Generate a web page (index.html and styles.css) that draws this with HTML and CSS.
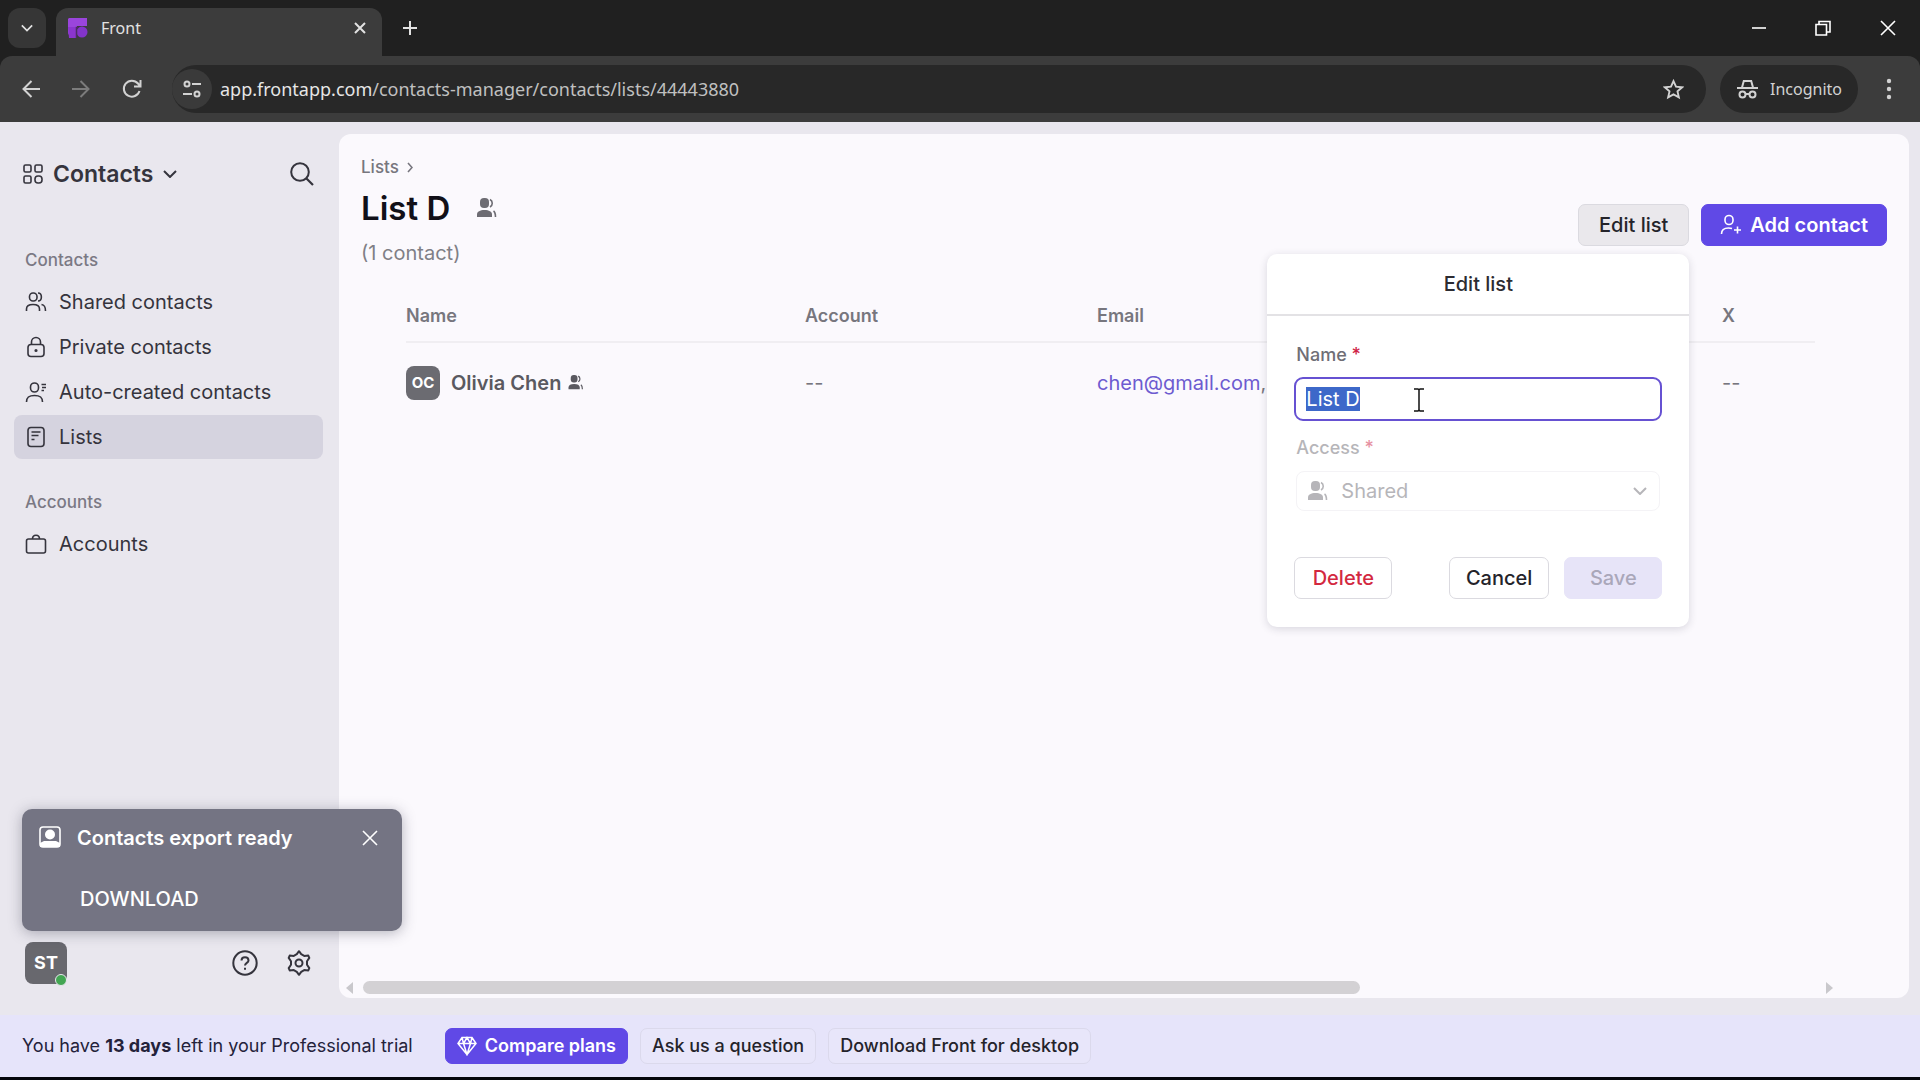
FILE: index.html
```html
<!DOCTYPE html>
<html lang="en">
<head>
<meta charset="utf-8">
<meta name="viewport" content="width=device-width, initial-scale=1">
<title>Front</title>
<link rel="stylesheet" href="styles.css">
</head>
<body>
<svg class="sprite" aria-hidden="true">
  <symbol id="people" viewBox="0 0 20 20">
    <rect x="3" y="0" width="9" height="10" rx="4"/>
    <path d="M0 19v-2.500C0 13.500 3 12 7.500 12s7.500 1.500 7.500 4.500V19z"/>
    <path d="M13 1.500c3 1.500 3 6 0 7.500M16.500 13c1.500 1 2 3 2 6" fill="none" stroke="currentColor" stroke-width="1.600"/>
  </symbol>
  <symbol id="chevron" viewBox="0 0 14 8"><path d="M1 1l6 6 6-6" fill="none" stroke="currentColor" stroke-width="2"/></symbol>
</svg>

<header class="browser">
  <div class="tabstrip">
    <button class="tab-search" aria-label="Search tabs"><svg width="12" height="8"><use href="#chevron"/></svg></button>
    <div class="tab">
      <svg class="favicon" width="20" height="20" viewBox="0 0 20 20"><path d="M1 0h18v8H9v11H5a5 5 0 0 1-5-5V1z" fill="#9a45dc"/><path d="M0 9h8v11H1z" fill="#8b35ce"/><circle cx="14" cy="14" r="5.500" fill="#8334c9"/><path d="M8.500 20V9.500h2" fill="none" stroke="#4c2b66" stroke-width="1.500"/></svg>
      <span class="tab-title">Front</span>
      <button class="bare" aria-label="Close tab"><svg width="12" height="12" viewBox="0 0 12 12" class="line"><path d="M1 1l10 10M11 1L1 11" stroke-width="2"/></svg></button>
    </div>
    <button class="bare new-tab" aria-label="New tab"><svg width="16" height="16" viewBox="0 0 16 16" class="line"><path d="M8 1v14M1 8h14" stroke-width="2"/></svg></button>
    <div class="window-controls">
      <button class="bare" aria-label="Minimize"><svg width="14" height="14" viewBox="0 0 14 14" class="line"><path d="M0 7h14"/></svg></button>
      <button class="bare" aria-label="Restore"><svg width="16" height="16" viewBox="0 0 16 16" class="line"><path d="M1 4.500h10.500V15H1zM4 4V1.500h11V12h-3"/></svg></button>
      <button class="bare" aria-label="Close"><svg width="16" height="16" viewBox="0 0 16 16" class="line"><path d="M1 1l14 14M15 1L1 15"/></svg></button>
    </div>
  </div>
  <div class="toolbar">
    <div class="nav">
      <button class="bare" aria-label="Back"><svg width="18" height="18" viewBox="0 0 18 18" class="line"><path d="M18 9H2M9.500 1L1.500 9l8 8" stroke-width="2"/></svg></button>
      <button class="bare dim" aria-label="Forward"><svg width="18" height="18" viewBox="0 0 18 18" class="line"><path d="M0 9h16M8.500 1l8 8-8 8" stroke-width="2"/></svg></button>
      <button class="bare" aria-label="Reload"><svg width="20" height="20" viewBox="0 0 20 20" class="line"><path d="M17.500 12a8 8 0 1 1-1.500-7.500l2 2.500M18.500 1v6.500H12" stroke-width="2"/></svg></button>
    </div>
    <div class="omnibox">
      <button class="site-info" aria-label="Site information"><svg width="18" height="18" viewBox="0 0 18 18" class="line"><circle cx="4" cy="4" r="2.500" stroke-width="2"/><circle cx="14" cy="14" r="2.500" stroke-width="2"/><path d="M9 4h9M0 14h9" stroke-width="2"/></svg></button>
      <div class="url">app.frontapp.com<span>/contacts-manager/contacts/lists/44443880</span></div>
      <button class="bare" aria-label="Bookmark"><svg width="21" height="21" viewBox="0 0 20 20" class="line"><path d="M10 2l2.400 5.300 5.800.6-4.400 3.900 1.300 5.700L10 14.600l-5.100 2.900 1.300-5.700L1.800 7.900l5.800-.6z" stroke-width="1.800"/></svg></button>
    </div>
    <button class="incognito"><svg width="21" height="20" viewBox="0 0 21 20" class="line"><path d="M5 8.500L6.800 2h7.400L16 8.500M0 9h21" stroke-width="2"/><circle cx="5.500" cy="15.500" r="3" stroke-width="2"/><circle cx="15.500" cy="15.500" r="3" stroke-width="2"/><path d="M8.500 15h4" stroke-width="2"/></svg>Incognito</button>
    <button class="bare" aria-label="Menu"><svg width="6" height="22" viewBox="0 0 6 22" fill="currentColor"><circle cx="3" cy="3" r="2.200"/><circle cx="3" cy="11" r="2.200"/><circle cx="3" cy="19" r="2.200"/></svg></button>
  </div>
</header>

<div class="app">
  <aside class="sidebar">
    <div class="side-head">
      <button class="switcher"><svg width="20" height="20" viewBox="0 0 20 20" class="line"><rect x="1" y="1" width="7" height="7" rx="1.500"/><rect x="12" y="1" width="7" height="7" rx="1.500"/><rect x="1" y="12" width="7" height="7" rx="1.500"/><rect x="12" y="12" width="7" height="7" rx="3"/></svg>Contacts<svg class="caret" width="14" height="8"><use href="#chevron"/></svg></button>
      <button class="bare" aria-label="Search"><svg width="24" height="24" viewBox="0 0 24 24" class="line"><circle cx="10" cy="10" r="8.800" stroke-width="2"/><path d="M16.500 16.500L23 23" stroke-width="2.200"/></svg></button>
    </div>
    <nav>
      <h2>Contacts</h2>
      <a href="#shared"><svg width="22" height="22" viewBox="0 0 22 22" class="line"><rect x="4.500" y="2" width="7.500" height="8" rx="3.500"/><path d="M1.500 20v-2c0-3 2-4.500 6.500-4.500s6.500 1.500 6.500 4.500v2M13 2c4.500 0 4.500 8 0 8M16.500 13.500c3 .5 4 2 4 6.500"/></svg>Shared contacts</a>
      <a href="#private"><svg width="22" height="22" viewBox="0 0 22 22" class="line"><rect x="3" y="8.500" width="16" height="12" rx="3"/><path d="M6.500 8V6a4.500 4.500 0 0 1 9 0v2"/><circle cx="11" cy="14.500" r=".8"/></svg>Private contacts</a>
      <a href="#auto"><svg width="22" height="22" viewBox="0 0 22 22" class="line"><rect x="5.500" y="2" width="8" height="9" rx="4"/><path d="M1.500 21c0-5 2.500-6.500 8-6.500s8 1.500 8 6.500M16.500 3.500H21M17 6.500h4M16.500 9.500h2.500"/></svg>Auto-created contacts</a>
      <a href="#lists" class="active" aria-current="page"><svg width="22" height="22" viewBox="0 0 22 22" class="line"><rect x="3" y="1.500" width="16" height="19" rx="3"/><path d="M6.500 6h9M6.500 9.500h7M6.500 13.500h3"/></svg>Lists</a>
      <h2 class="second">Accounts</h2>
      <a href="#accounts"><svg width="22" height="22" viewBox="0 0 22 22" class="line"><rect x="1.500" y="6" width="19" height="14" rx="2"/><path d="M7.500 6c0-5 7-5 7 0"/></svg>Accounts</a>
    </nav>
    <div class="side-foot">
      <button class="user" aria-label="Account ST">ST<span class="presence"></span></button>
      <button class="bare" aria-label="Help"><svg width="26" height="26" viewBox="0 0 26 26" class="line"><circle cx="13" cy="13" r="11.700" stroke-width="2"/><path d="M9.500 10.500c0-4.500 7-4.500 7 0 0 2.500-3.500 2.300-3.500 5M13 17.800v2" stroke-width="2"/></svg></button>
      <button class="bare" aria-label="Settings"><svg width="26" height="26" viewBox="0 0 26 26" class="line"><path d="M10.800 4.200L13 1.200l2.200 3 3 1.700 4.100-.3 1 2.300-2.300 3.300v3.600l2.300 3.300-1 2.300-4.100-.3-3 1.700-2.200 3-2.200-3-3-1.700-4.100.3-1-2.300L5 14.800v-3.600L2.700 7.900l1-2.300 4.100.3z" stroke-width="2" stroke-linejoin="round"/><circle cx="13" cy="13" r="3.500" stroke-width="2"/></svg></button>
    </div>
    <section class="toast" role="status">
      <svg width="22" height="22" viewBox="0 0 22 22"><rect x="1" y="1" width="20" height="20" rx="3" fill="none" stroke="#fff" stroke-width="1.600"/><circle cx="11" cy="8.500" r="5" fill="#fff"/><path d="M1 21v-4l4-2h12l4 2v4z" fill="#fff"/></svg>
      <strong>Contacts export ready</strong>
      <button class="bare" aria-label="Dismiss"><svg width="16" height="16" viewBox="0 0 16 16" class="line"><path d="M1 1l14 14M15 1L1 15"/></svg></button>
      <a href="#download">DOWNLOAD</a>
    </section>
  </aside>

  <main class="card">
    <div class="head">
      <div>
        <div class="crumb"><a href="#lists">Lists</a><svg width="6" height="11" viewBox="0 0 6 11" class="line"><path d="M1 1l4 4.500L1 10"/></svg></div>
        <h1>List D<svg width="22" height="20"><use href="#people"/></svg></h1>
        <p class="count">(1 contact)</p>
      </div>
      <div class="actions">
        <div class="anchor">
          <button class="btn pressed" aria-expanded="true">Edit list</button>
          <form class="popover" aria-label="Edit list">
            <h2>Edit list</h2>
            <div class="fields">
              <label for="list-name">Name <span class="req">*</span></label>
              <input id="list-name" type="text" value="List D" autofocus>
              <label class="off" for="access">Access <span class="req">*</span></label>
              <div class="select off">
                <svg width="22" height="20"><use href="#people"/></svg>
                <select id="access" disabled><option>Shared</option></select>
                <svg class="caret" width="14" height="8"><use href="#chevron"/></svg>
              </div>
              <div class="form-actions">
                <button type="button" class="btn danger">Delete</button>
                <button type="button" class="btn">Cancel</button>
                <button type="submit" class="btn save" disabled>Save</button>
              </div>
            </div>
            <svg class="ibeam" width="10" height="24" viewBox="0 0 10 24" class="line"><path d="M0 1h4l1 1 1-1h4M0 23h4l1-1 1 1h4M5 2v20" fill="none" stroke="#111" stroke-width="1.500"/></svg>
          </form>
        </div>
        <button class="btn primary"><svg width="22" height="22" viewBox="0 0 22 22" class="line"><rect x="5" y="1.500" width="8" height="9" rx="4"/><path d="M1.500 20c0-4.500 2.500-6 7-6 1.500 0 2.500.2 3.500.5M17.500 12.500v7M14 16h7"/></svg>Add contact</button>
      </div>
    </div>
    <table>
      <colgroup><col class="c-name"><col class="c-account"><col><col class="c-x"></colgroup>
      <thead><tr><th>Name</th><th>Account</th><th>Email</th><th>X</th></tr></thead>
      <tbody><tr>
        <td><div class="person"><span class="avatar">OC</span>Olivia Chen<svg width="16" height="15"><use href="#people"/></svg></div></td>
        <td>--</td>
        <td><a href="mailto:chen@gmail.com">chen@gmail.com</a>,</td>
        <td>--</td>
      </tr></tbody>
    </table>
    <div class="scroll">
      <svg width="7" height="12" viewBox="0 0 7 12"><path d="M7 0v12L0 6z"/></svg>
      <div class="track"><div class="thumb"></div></div>
      <svg width="7" height="12" viewBox="0 0 7 12"><path d="M0 0v12l7-6z"/></svg>
    </div>
  </main>
</div>

<footer class="trial">
  <p>You have <b>13 days</b> left in your Professional trial</p>
  <button class="btn primary"><svg width="20" height="20" viewBox="0 0 20 20" class="line"><path d="M5 1.500h10l4 6L10 18.500 1 7.500zM1 7.500h18M10 1.500L6.500 7.500l3.500 11 3.500-11zM5 1.500l1.500 6M15 1.500l-1.500 6" stroke-width="1.500"/></svg>Compare plans</button>
  <button class="btn ghost">Ask us a question</button>
  <button class="btn ghost">Download Front for desktop</button>
</footer>
<script src="script.js"></script>
</body>
</html>
```
FILE: script.js
```js
const nameField = document.getElementById('list-name');
nameField.focus();
nameField.select();
```
FILE: styles.css
```css
* { box-sizing: border-box; }
body {
  margin: 0;
  min-height: 100vh;
  display: flex;
  flex-direction: column;
  background: #e9e7ee;
  border-bottom: 3px solid #05050c;
  color: #35343d;
  font: 20px/24px Inter, "Liberation Sans", sans-serif;
}
h1, h2, p { margin: 0; }
a { color: inherit; text-decoration: none; }
button, input, select { font: inherit; color: inherit; margin: 0; }
button { cursor: pointer; }
svg { flex: none; display: block; }
.sprite { position: absolute; width: 0; height: 0; }
use { fill: currentColor; }
.line { fill: none; stroke: currentColor; stroke-width: 1.6; }
.bare { display: flex; align-items: center; justify-content: center; padding: 0; border: 0; background: none; }

/* browser window */
.browser { background: #202020; color: #e2e2e2; font-family: "Noto Sans", "Open Sans", sans-serif; }
.tabstrip { display: flex; align-items: center; height: 56px; padding: 8px 24px 0 8px; }
.tab-search { width: 38px; height: 40px; margin-bottom: 8px; border: 0; border-radius: 12px; background: #363636; display: grid; place-items: center; padding: 0; }
.tab { display: flex; align-items: center; width: 326px; height: 48px; margin-left: 10px; padding: 0 16px 8px 12px; border-radius: 12px 12px 0 0; background: #3c3c3c; }
.tab-title { flex: 1; margin-left: 13px; font-size: 16px; }
.new-tab { margin: 0 0 8px 20px; }
.window-controls { display: flex; gap: 49px; margin: 0 0 8px auto; color: #fff; }
.toolbar { display: flex; align-items: center; height: 66px; padding: 0 28px 0 22px; background: #3c3c3c; border-radius: 12px 12px 0 0; color: #d2d2d2; }
.nav { display: flex; gap: 32px; margin-right: 30px; }
.dim { color: #7c7c7c; }
.omnibox { flex: 1; display: flex; align-items: center; height: 48px; padding: 0 22px 0 0; border-radius: 24px; background: #282828; }
.site-info { width: 40px; height: 40px; padding: 0; border: 0; border-radius: 50%; background: #3a3a3a; display: grid; place-items: center; }
.url { flex: 1; margin-left: 8px; font-size: 18px; color: #e6e6e6; }
.url span { color: #c0c0c0; }
.incognito { display: flex; align-items: center; gap: 12px; width: 138px; height: 48px; margin: 0 28px 0 14px; padding: 0 0 0 17px; border: 0; border-radius: 24px; background: #282828; font-size: 16px; }

/* application */
.app { flex: 1; display: flex; padding: 12px 11px 17px 0; }
.sidebar { position: relative; width: 339px; display: flex; flex-direction: column; padding: 28px 16px 14px 14px; }
.side-head { display: flex; justify-content: space-between; align-items: center; padding: 0 9px; }
.switcher { display: flex; align-items: center; gap: 10px; padding: 0; border: 0; background: none; font-size: 23px; font-weight: 600; }
nav { display: flex; flex-direction: column; margin-top: 62px; }
nav h2 { padding-left: 11px; margin-bottom: 8px; font-size: 17px; font-weight: 500; color: #7b7984; }
nav h2.second { margin-top: 30px; }
nav a { display: flex; align-items: center; gap: 12px; height: 44px; margin-bottom: 1px; padding-left: 11px; border-radius: 8px; }
nav a.active { background: #d5d3df; }
.side-foot { display: flex; align-items: center; gap: 28px; margin-top: auto; padding: 0 11px; }
.user { position: relative; width: 42px; height: 42px; margin-right: auto; padding: 0; border: 0; border-radius: 8px; background: #68686e; color: #fff; font-size: 18px; font-weight: 700; }
.presence { position: absolute; right: 0; bottom: -2px; width: 12px; height: 12px; border: 1px solid #e9e7ee; border-radius: 50%; background: #43a653; }
.toast { position: absolute; z-index: 2; left: 22px; bottom: 67px; width: 380px; height: 122px; padding: 17px 24px 20px 17px; display: grid; grid-template-columns: 22px 1fr 16px; align-content: space-between; column-gap: 16px; border-radius: 10px; background: #747483; color: #fff; box-shadow: 0 2px 14px rgba(50, 48, 70, .35); }
.toast strong { font-weight: 600; }
.toast a { grid-column: 2; padding-left: 3px; font-weight: 500; }

.card { flex: 1; min-width: 0; display: flex; flex-direction: column; padding-top: 21px; border-radius: 12px; background: #fbf9fd; }
.head { display: flex; justify-content: space-between; padding: 0 22px; }
.crumb { display: flex; align-items: center; gap: 8px; font-size: 17px; font-weight: 500; color: #77767e; }
h1 { display: flex; align-items: center; gap: 26px; margin-top: 9px; font-size: 33px; line-height: 40px; font-weight: 600; color: #111018; }
h1 svg { color: #6d6c73; }
.count { margin-top: 13px; color: #807f86; }
.actions { display: flex; align-items: flex-start; gap: 12px; padding-top: 49px; }
.anchor { position: relative; }
.btn { display: inline-flex; align-items: center; justify-content: center; gap: 8px; height: 42px; padding: 0 20px; border: 1px solid #dbdae0; border-radius: 7px; background: #fff; color: #24232a; font-weight: 500; white-space: nowrap; }
.btn.pressed { background: #eae8ec; }
.btn.primary { padding: 0 18px; border-color: #6049e6; background: #6049e6; color: #fff; font-weight: 600; }

table { margin: 26px 94px 0 67px; table-layout: fixed; border-collapse: collapse; }
.c-name { width: 399px; }
.c-account { width: 292px; }
.c-x { width: 93px; }
th, td { padding: 0; text-align: left; color: #77767e; }
th { height: 51px; border-bottom: 2px solid #f0eef2; font-size: 18px; font-weight: 600; }
td { height: 80px; }
td a { color: #6d5bd0; }
.person { display: flex; align-items: center; gap: 7px; font-weight: 600; color: #5a5960; }
.avatar { display: grid; place-items: center; width: 34px; height: 34px; margin-right: 4px; border-radius: 8px; background: #6b6b71; color: #fff; font-size: 15px; font-weight: 700; }
.scroll { display: flex; align-items: center; gap: 10px; margin-top: auto; padding: 0 76px 4px 7px; fill: #c9c8cc; }
.track { flex: 1; }
.thumb { width: 68.6%; height: 13px; border-radius: 7px; background: #d3d1d4; }

/* edit popover */
.popover { position: absolute; z-index: 3; top: 50px; right: 0; width: 422px; border-radius: 10px; background: #fff; box-shadow: 0 2px 8px rgba(40, 38, 60, .16); }
.popover h2 { padding: 18px 0; border-bottom: 2px solid #e3e2e5; text-align: center; font-size: 20px; font-weight: 500; color: #2c2b31; }
.fields { display: flex; flex-direction: column; padding: 27px 27px 28px; }
label { padding-left: 2px; font-size: 18px; font-weight: 500; color: #6f6e75; }
.req { color: #cf2346; }
.off { opacity: .5; }
#list-name { width: 100%; height: 44px; margin: 10px 0 15px; padding: 0 10px; border: 2px solid #6651d2; border-radius: 9px; outline: 0; background: #fff; }
#list-name::selection { background: #3d68c9; color: #fff; }
.select { display: flex; align-items: center; gap: 12px; height: 40px; margin: 11px 2px 46px; padding: 0 12px 0 10px; border: 1px solid #eae8ee; border-radius: 8px; color: #6f6e75; }
.select select { flex: 1; appearance: none; padding: 0; border: 0; background: none; opacity: 1; color: inherit; }
.form-actions { display: flex; gap: 15px; }
.form-actions .btn { min-width: 98px; padding: 0 16px; }
.btn.danger { margin-right: auto; color: #d3283f; }
.btn.save { border-color: #e7e4f8; background: #e7e4f8; color: #aaa7ba; }
.ibeam { position: absolute; left: 147px; top: 134px; }

/* trial bar */
.trial { display: flex; align-items: center; gap: 12px; height: 62px; padding: 0 22px; background: #e6e4fa; color: #24223a; font-size: 18px; }
.trial p { margin-right: 20px; }
.trial .btn { height: 36px; padding: 0 11px; font-size: 18px; }
.trial .ghost { border-color: #dbd9ec; background: #e8e6fa; }
```
